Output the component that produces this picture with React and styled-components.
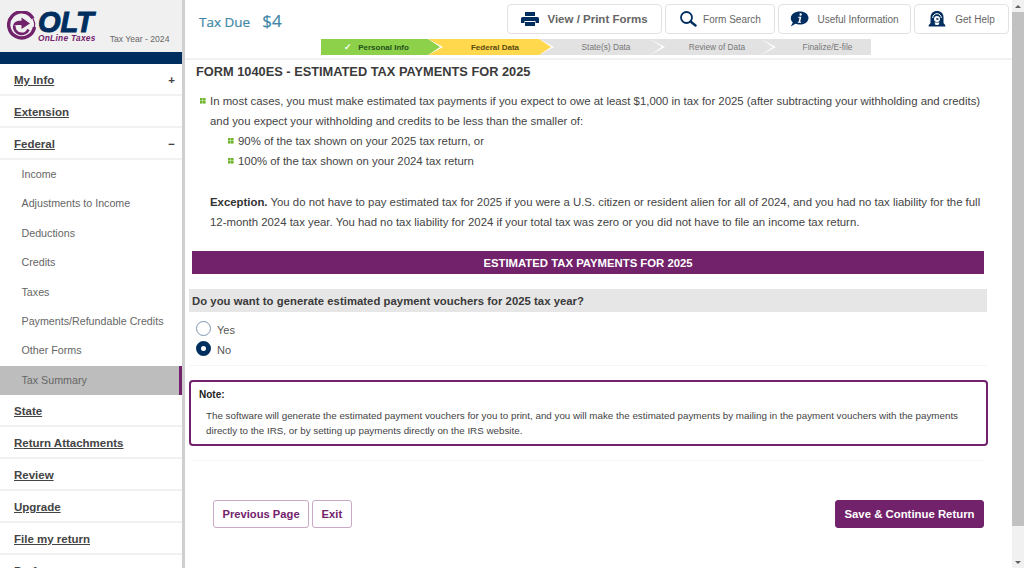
import styled, { createGlobalStyle } from 'styled-components'

const GlobalStyle = createGlobalStyle`
    html, body {
        margin: 0;
        height: 100%;
        overflow: hidden;
        background: #fff;
        font-family: "Liberation Sans", Arial, sans-serif;
    }
    * { box-sizing: border-box; }
`

const purple = '#72216b'
const navy = '#002f5f'

const Page = styled.div`
    display: flex;
    width: 1024px;
    height: 568px;
    overflow: hidden;
`

const Sidebar = styled.aside`
    width: 185px;
    flex-shrink: 0;
    border-right: 3px solid #cfcfcf;
    overflow: hidden;
`

const Brand = styled.div`
    height: 52px;
    margin-right: -3px;
    background: #f0f0f0;
    display: flex;
    align-items: flex-start;
    padding: 11px 0 0 7px;
`

const LogoWords = styled.div`
    display: flex;
    flex-direction: column;
    margin-left: 2px;
`

const LogoMark = styled.span`
    font-size: 29px;
    line-height: 22px;
    height: 22px;
    font-weight: bold;
    font-style: italic;
    color: ${navy};
    -webkit-text-stroke: 1px ${navy};
`

const LogoName = styled.span`
    font-size: 8.3px;
    line-height: 9px;
    margin-top: 1px;
    font-weight: bold;
    font-style: italic;
    color: ${purple};
    letter-spacing: 0.3px;
    white-space: nowrap;
`

const TaxYear = styled.span`
    font-size: 8.6px;
    color: #666;
    margin: 23px 0 0 14px;
    white-space: nowrap;
`

const NavyStrip = styled.div`
    height: 12px;
    background: ${navy};
`

const MenuItem = styled.div`
    height: 32px;
    display: flex;
    align-items: center;
    justify-content: space-between;
    padding: 1.5px 7px 0 14px;
    border-bottom: 2px solid #f1f1f1;
    font-size: 11.5px;
    font-weight: bold;
    color: #444;
    span:first-child { text-decoration: underline; }
`

const SubItem = styled.div`
    height: 29.4px;
    display: flex;
    align-items: center;
    padding: 0 0 1.5px 21.5px;
    font-size: 10.7px;
    color: #666;
    background: ${(p) => (p.$active ? '#bdbdbd' : 'transparent')};
    border-right: 3px solid ${(p) => (p.$active ? purple : 'transparent')};
`

const Main = styled.main`
    flex: 1;
    min-width: 0;
    display: flex;
    flex-direction: column;
`

const Header = styled.header`
    height: 60px;
    flex-shrink: 0;
    border-bottom: 2px solid #f1f1f1;
    position: relative;
    display: flex;
    flex-direction: column;
    align-items: flex-end;
    padding: 4px 3px 0 0;
`

const TaxDue = styled.div`
    position: absolute;
    left: 14px;
    top: 9px;
    display: flex;
    align-items: baseline;
    gap: 12px;
    font-family: "Open Sans", sans-serif;
    font-size: 13.5px;
    color: #3f87a6;
    -webkit-text-stroke: 0.2px #3f87a6;
    b {
        font-weight: 400;
        font-size: 17px;
    }
`

const Tools = styled.div`
    display: flex;
    gap: 3px;
`

const ToolButton = styled.div`
    height: 30px;
    width: ${(p) => p.$width}px;
    display: flex;
    align-items: center;
    justify-content: center;
    gap: ${(p) => p.$gap || 8}px;
    border: 1px solid #e2e2e2;
    border-radius: 4px;
    font-size: ${(p) => (p.$strong ? '11.5px' : '10px')};
    font-weight: ${(p) => (p.$strong ? 'bold' : 'normal')};
    color: #666;
    background: #fff;
`

const Steps = styled.div`
    display: flex;
    align-self: flex-start;
    margin: 5px 0 0 136px;
    gap: 1px;
`

const Step = styled.div`
    position: relative;
    width: ${(p) => p.$width || 110}px;
    height: 16px;
    display: flex;
    align-items: center;
    justify-content: center;
    gap: 6px;
    padding-left: ${(p) => (p.$first ? '4px' : '22px')};
    font-size: ${(p) => (p.$dim ? '8.3px' : '8px')};
    font-weight: ${(p) => (p.$dim ? 'normal' : 'bold')};
    color: ${(p) => p.$text};
    background: ${(p) => p.$bg};
    &::after {
        content: ${(p) => (p.$last ? 'none' : '""')};
        position: absolute;
        z-index: 2;
        top: 0;
        right: -12px;
        border-left: 12px solid ${(p) => p.$bg};
        border-top: 8px solid transparent;
        border-bottom: 8px solid transparent;
    }
    &::before {
        content: ${(p) => (p.$first ? 'none' : '""')};
        position: absolute;
        z-index: 1;
        top: 0;
        left: -1px;
        border-left: 15px solid #fff;
        border-top: 8px solid transparent;
        border-bottom: 8px solid transparent;
    }
`

const Check = styled.span`
    color: #fff;
    font-size: 9px;
`

const Content = styled.div`
    flex: 1;
    min-height: 0;
    padding: 4px 0 0 0;
`

const Title = styled.h1`
    margin: 0 0 0 11px;
    font-size: 12.8px;
    line-height: 16px;
    font-weight: bold;
    color: #3a3a3a;
`

const Prose = styled.div`
    margin: 11px 0 0 25px;
    font-size: 11.38px;
    line-height: 20px;
    color: #444;
`

const Bullet = styled.div`
    position: relative;
    margin-left: ${(p) => (p.$indent ? '28px' : '0')};
    width: ${(p) => (p.$indent ? '700px' : '780px')};
    &::before {
        content: "";
        position: absolute;
        left: -10px;
        top: 7px;
        width: 6px;
        height: 6px;
        background:
            linear-gradient(#6fb52c, #6fb52c) 0 0 / 2.6px 2.6px no-repeat,
            linear-gradient(#6fb52c, #6fb52c) 100% 0 / 2.6px 2.6px no-repeat,
            linear-gradient(#6fb52c, #6fb52c) 0 100% / 2.6px 2.6px no-repeat,
            linear-gradient(#6fb52c, #6fb52c) 100% 100% / 2.6px 2.6px no-repeat;
    }
`

const Exception = styled.p`
    margin: 21px 0 0 0;
    width: 780px;
    b { color: #333; }
`

const Band = styled.div`
    margin: 19px 0 0 7px;
    width: 792px;
    height: 23px;
    display: flex;
    align-items: center;
    justify-content: center;
    background: ${purple};
    color: #fff;
    font-size: 11.34px;
    font-weight: bold;
`

const Question = styled.div`
    margin: 15px 0 0 4px;
    width: 798px;
    height: 23px;
    display: flex;
    align-items: center;
    padding-left: 3px;
    background: #e6e6e6;
    color: #3a3a3a;
    font-size: 11.3px;
    font-weight: bold;
    letter-spacing: 0.04px;
`

const Options = styled.div`
    margin: 9px 0 0 4px;
    width: 798px;
    padding: 0 0 9px 7px;
    border-bottom: 1px solid #f5f5f5;
    display: flex;
    flex-direction: column;
    gap: 5px;
`

const Option = styled.label`
    display: flex;
    align-items: center;
    gap: 6px;
    height: 15px;
    font-size: 11px;
    color: #555;
    span { margin-top: 3px; }
`

const Radio = styled.i`
    width: 15px;
    height: 15px;
    border-radius: 50%;
    background: #fff;
    border: ${(p) => (p.$on ? `5px solid ${navy}` : '1px solid #7f97b2')};
`

const Note = styled.section`
    margin: 14px 0 0 4px;
    width: 799px;
    height: 66px;
    border: 2px solid ${purple};
    border-radius: 4px;
    padding: 7px 8px;
    font-size: 9.8px;
    color: #444;
    h2 {
        margin: 0;
        font-size: 10px;
        line-height: 12px;
        color: #222;
    }
    p {
        margin: 8px 0 0 7px;
        line-height: 14.5px;
    }
`

const Rule = styled.div`
    margin: 14px 0 0 7px;
    width: 792px;
    border-top: 1px solid #f7f7f7;
`

const Actions = styled.div`
    margin: 39px 0 0 28px;
    width: 771px;
    display: flex;
    gap: 3px;
`

const Button = styled.div`
    height: 28px;
    display: flex;
    align-items: center;
    padding: 0 8.5px;
    border-radius: 3px;
    border: 1px solid ${(p) => (p.$solid ? purple : '#c9a9c6')};
    background: ${(p) => (p.$solid ? purple : '#fff')};
    color: ${(p) => (p.$solid ? '#fff' : purple)};
    font-size: ${(p) => (p.$solid ? '11.37px' : '11.2px')};
    font-weight: bold;
    margin-left: ${(p) => (p.$push ? 'auto' : '0')};
`

const Scrollbar = styled.div`
    width: 12px;
    flex-shrink: 0;
    background: #f1f1f1;
    display: flex;
    flex-direction: column;
    align-items: center;
`

const Arrow = styled.i`
    height: 12px;
    flex-shrink: 0;
    display: flex;
    align-items: center;
    &::before {
        content: "";
        border-left: 3px solid transparent;
        border-right: 3px solid transparent;
        border-${(p) => (p.$down ? 'top' : 'bottom')}: 3px solid #606060;
    }
`

const Thumb = styled.div`
    width: 100%;
    height: 514px;
    background: #c1c1c1;
`

const Spacer = styled.div`
    flex: 1;
`

const LogoIcon = () => (
    <svg width="29" height="31" viewBox="0 0 29 31">
        <path d="M26 7.500A13 13 0 1 0 27.500 16" fill="none" stroke={purple} strokeWidth="3.4" />
        <path d="M27.500 16A13 13 0 0 0 26 7.500" fill="none" stroke={purple} strokeWidth="1.2" />
        <path d="M21.500 18.500A7.500 7.500 0 0 1 7.200 15" fill="none" stroke={purple} strokeWidth="2.800" />
        <path d="M6 15.500C6.500 11 10 9.500 14.500 9.800V6.500L23 12.500 14.500 18V14.200C11 14 8.500 14 6 15.500z" fill={purple} />
    </svg>
)

const PrintIcon = () => (
    <svg width="18" height="14" viewBox="0 0 18 14">
        <rect x="4" y="0" width="10" height="4" fill={navy} />
        <path d="M1.500 5h15A1.500 1.500 0 0 1 18 6.500V11h-3.500V9h-11v2H0V6.500A1.500 1.500 0 0 1 1.500 5z" fill={navy} />
        <rect x="4" y="10" width="10" height="4" fill={navy} />
    </svg>
)

const SearchIcon = () => (
    <svg width="18" height="16" viewBox="0 0 18 16">
        <circle cx="7.500" cy="6.500" r="5.500" fill="none" stroke={navy} strokeWidth="1.800" />
        <path d="M11.500 10.500L16.500 14.500" stroke={navy} strokeWidth="2.400" strokeLinecap="round" />
    </svg>
)

const InfoIcon = () => (
    <svg width="19" height="16" viewBox="0 0 19 16">
        <path d="M10 .5C14.800 .5 18.500 3.200 18.500 7S14.800 13.500 10 13.500C8 13.500 6.500 13.200 5.500 12.800L.8 15.500 2.800 11.500C1.500 10.400.8 8.800.8 7 .8 3.200 5 .5 10 .5z" fill={navy} />
        <path d="M10.700 2.300a1.200 1.200 0 1 1-.1 2.400 1.200 1.200 0 0 1 .1-2.400zM8.300 5.800h3l-1.100 5h1l-.3 1H7.600l.3-1h.8l.8-4H8.100z" fill="#fff" />
    </svg>
)

const HelpIcon = () => (
    <svg width="18" height="16" viewBox="0 0 18 16">
        <path d="M9 0C5 0 2.500 2.500 2.500 6.500V12h13V6.500C15.500 2.500 13 0 9 0z" fill={navy} />
        <path d="M4.700 7A4.300 4.300 0 0 1 13.300 7" fill="none" stroke="#fff" strokeWidth="1" />
        <circle cx="9" cy="8" r="3" fill="#fff" />
        <path d="M8 7.200h2.500v1.600h-2z" fill={navy} />
        <path d="M.5 15.500c.3-2 1.500-3.500 3.500-4h10c2 .5 3.200 2 3.500 4z" fill={navy} />
        <path d="M6.500 11.500h5l-1 2.500h-3z" fill="#fff" />
    </svg>
)

const subItems = ['Income', 'Adjustments to Income', 'Deductions', 'Credits', 'Taxes', 'Payments/Refundable Credits', 'Other Forms', 'Tax Summary']
const lowerItems = ['State', 'Return Attachments', 'Review', 'Upgrade', 'File my return', 'Preferences']

const App = () => {
    return (
        <Page>
            <GlobalStyle />
            <Sidebar>
                <Brand>
                    <LogoIcon />
                    <LogoWords>
                        <LogoMark>OLT</LogoMark>
                        <LogoName>OnLine Taxes</LogoName>
                    </LogoWords>
                    <TaxYear>Tax Year - 2024</TaxYear>
                </Brand>
                <NavyStrip />
                <MenuItem><span>My Info</span><span>+</span></MenuItem>
                <MenuItem><span>Extension</span></MenuItem>
                <MenuItem><span>Federal</span><span>−</span></MenuItem>
                {subItems.map((item) => (
                    <SubItem key={item} $active={item === 'Tax Summary'}>{item}</SubItem>
                ))}
                {lowerItems.map((item) => (
                    <MenuItem key={item}><span>{item}</span></MenuItem>
                ))}
            </Sidebar>
            <Main>
                <Header>
                    <TaxDue>Tax Due <b>$4</b></TaxDue>
                    <Tools>
                        <ToolButton $width={155} $strong $gap={8}>
                            <PrintIcon />View / Print Forms
                        </ToolButton>
                        <ToolButton $width={110} $gap={6}><SearchIcon />Form Search</ToolButton>
                        <ToolButton $width={133}><InfoIcon />Useful Information</ToolButton>
                        <ToolButton $width={95} $gap={9}><HelpIcon />Get Help</ToolButton>
                    </Tools>
                    <Steps>
                        <Step $first $width={107} $bg="#8dd04a" $text="#24511a"><Check>✓</Check>Personal Info</Step>
                        <Step $bg="#ffd84d" $text="#5a4a10">Federal Data</Step>
                        <Step $dim $bg="#e2e2e2" $text="#777">State(s) Data</Step>
                        <Step $dim $bg="#e2e2e2" $text="#777">Review of Data</Step>
                        <Step $dim $last $width={109} $bg="#e2e2e2" $text="#777">Finalize/E-file</Step>
                    </Steps>
                </Header>
                <Content>
                    <Title>FORM 1040ES - ESTIMATED TAX PAYMENTS FOR 2025</Title>
                    <Prose>
                        <Bullet>In most cases, you must make estimated tax payments if you expect to owe at least $1,000 in tax for 2025 (after subtracting your withholding and credits) and you expect your withholding and credits to be less than the smaller of:</Bullet>
                        <Bullet $indent>90% of the tax shown on your 2025 tax return, or</Bullet>
                        <Bullet $indent>100% of the tax shown on your 2024 tax return</Bullet>
                        <Exception>
                            <b>Exception.</b> You do not have to pay estimated tax for 2025 if you were a U.S. citizen or resident alien for all of 2024, and you had no tax liability for the full 12-month 2024 tax year. You had no tax liability for 2024 if your total tax was zero or you did not have to file an income tax return.
                        </Exception>
                    </Prose>
                    <Band>ESTIMATED TAX PAYMENTS FOR 2025</Band>
                    <Question>Do you want to generate estimated payment vouchers for 2025 tax year?</Question>
                    <Options>
                        <Option><Radio /><span>Yes</span></Option>
                        <Option><Radio $on /><span>No</span></Option>
                    </Options>
                    <Note>
                        <h2>Note:</h2>
                        <p>The software will generate the estimated payment vouchers for you to print, and you will make the estimated payments by mailing in the payment vouchers with the payments directly to the IRS, or by setting up payments directly on the IRS website.</p>
                    </Note>
                    <Rule />
                    <Actions>
                        <Button>Previous Page</Button>
                        <Button>Exit</Button>
                        <Button $solid $push>Save &amp; Continue Return</Button>
                    </Actions>
                </Content>
            </Main>
            <Scrollbar>
                <Arrow />
                <Thumb />
                <Spacer />
                <Arrow $down />
            </Scrollbar>
        </Page>
    )
}

export default App
